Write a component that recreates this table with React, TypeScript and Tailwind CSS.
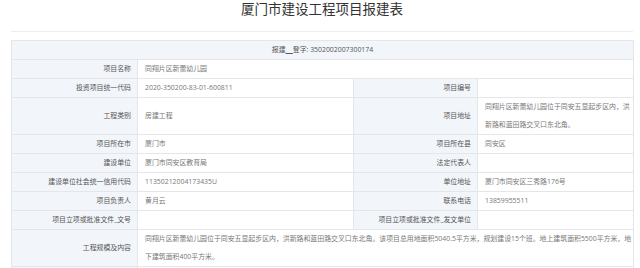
import React from "react";

const L = "bg-[#f2f6fb] text-right pr-[6px] text-[#555] border border-[#e4e6ea] leading-[18px] p-0 whitespace-nowrap overflow-hidden";
const V = "bg-white text-left pl-[7px] text-[#777] border border-[#e4e6ea] leading-[18px] p-0 whitespace-nowrap overflow-hidden";

export default function App() {
  return (
    <div
      className="w-[640px] h-[268px] overflow-hidden bg-white pl-[11px] pr-[7px]"
      style={{ fontFamily: '"Open Sans", "Noto Sans CJK SC", sans-serif' }}
    >
      <div className="h-[32px] border-b border-[#ededed] flex justify-center">
        <h1 className="text-[13.5px] leading-[18px] text-[#333] font-normal">厦门市建设工程项目报建表</h1>
      </div>
      <div className="h-[8px]" />
      <table className="table-fixed border-collapse w-[622px] text-[6.9px]">
        <colgroup>
          <col className="w-[126px]" />
          <col className="w-[216px]" />
          <col className="w-[124px]" />
          <col className="w-[156px]" />
        </colgroup>
        <tbody>
          <tr className="h-[19px]">
            <td colSpan={4} className="bg-[#f2f6fb] text-center text-[#555] border border-[#e4e6ea] leading-[18px] p-0">
              报建<span className="underline">&nbsp;&nbsp;&nbsp;&nbsp;</span>登字:&nbsp;3502002007300174
            </td>
          </tr>
          <tr>
            <td className={L}>项目名称</td>
            <td colSpan={3} className={V}>同翔片区新蕾幼儿园</td>
          </tr>
          <tr>
            <td className={L}>投资项目统一代码</td>
            <td className={V}>2020-350200-83-01-600811</td>
            <td className={L}>项目编号</td>
            <td className={V}></td>
          </tr>
          <tr>
            <td className={L}>工程类别</td>
            <td className={V}>房建工程</td>
            <td className={L}>项目地址</td>
            <td className={V}>
              同翔片区新蕾幼儿园位于同安五显起步区内，洪
              <br />
              新路和蓝田路交叉口东北角。
            </td>
          </tr>
          <tr>
            <td className={L}>项目所在市</td>
            <td className={V}>厦门市</td>
            <td className={L}>项目所在县</td>
            <td className={V}>同安区</td>
          </tr>
          <tr>
            <td className={L}>建设单位</td>
            <td className={V}>厦门市同安区教育局</td>
            <td className={L}>法定代表人</td>
            <td className={V}></td>
          </tr>
          <tr>
            <td className={L}>建设单位社会统一信用代码</td>
            <td className={V}>11350212004173435U</td>
            <td className={L}>单位地址</td>
            <td className={V}>厦门市同安区三秀路176号</td>
          </tr>
          <tr>
            <td className={L}>项目负责人</td>
            <td className={V}>黄月云</td>
            <td className={L}>联系电话</td>
            <td className={V}>13859955511</td>
          </tr>
          <tr>
            <td className={L}>项目立项或批准文件_文号</td>
            <td className={V}></td>
            <td className={L}>项目立项或批准文件_发文单位</td>
            <td className={V}></td>
          </tr>
          <tr>
            <td className={L}>工程规模及内容</td>
            <td colSpan={3} className={V}>
              同翔片区新蕾幼儿园位于同安五显起步区内，洪新路和蓝田路交叉口东北角。该项目总用地面积5040.5平方米，规划建设15个班。地上建筑面积5500平方米，地
              <br />
              下建筑面积400平方米。
            </td>
          </tr>
          <tr>
            <td className={L}>&nbsp;</td>
            <td colSpan={3} className={V}>&nbsp;</td>
          </tr>
        </tbody>
      </table>
    </div>
  );
}
